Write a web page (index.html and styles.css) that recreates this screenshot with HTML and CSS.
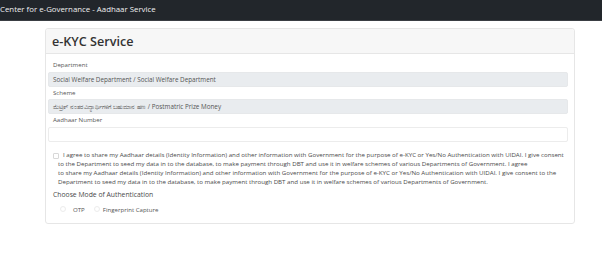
FILE: index.html
```html
<!DOCTYPE html>
<html>
<head>
<meta charset="utf-8">
<link rel="stylesheet" href="styles.css">
</head>
<body>
<nav class="navbar"><span class="brand">Center for e-Governance - Aadhaar Service</span></nav>
<div class="card">
  <div class="card-header">e-KYC Service</div>
  <div class="card-body">
    <label class="lbl">Department</label>
    <div class="input disabled">Social Welfare Department / Social Welfare Department</div>
    <label class="lbl">Scheme</label>
    <div class="input disabled">ಮೆಟ್ರಿಕ್ ನಂತರ ವಿದ್ಯಾರ್ಥಿಗಳಿಗೆ ಬಹುಮಾನ ಹಣ &nbsp;/ Postmatric Prize Money</div>
    <label class="lbl">Aadhaar Number</label>
    <div class="input"></div>
    <div class="consent">
      <span class="checkbox"></span>
      <p class="consent-text"><span class="first">I agree to share my Aadhaar details (Identity Information) and other information with Government for the purpose of e-KYC or Yes/No Authentication with UIDAI. I give consent</span><br>to the Department to seed my data in to the database, to make payment through DBT and use it in welfare schemes of various Departments of Government. I agree<br>to share my Aadhaar details (Identity Information) and other information with Government for the purpose of e-KYC or Yes/No Authentication with UIDAI. I give consent to the<br>Department to seed my data in to the database, to make payment through DBT and use it in welfare schemes of various Departments of Government.</p>
    </div>
    <div class="mode-title">Choose Mode of Authentication</div>
    <div class="radios">
      <span class="radio"></span><span class="rlabel">OTP</span>
      <span class="radio r2"></span><span class="rlabel">Fingerprint Capture</span>
    </div>
  </div>
</div>
</body>
</html>
```
FILE: styles.css
```css
html, body {
  margin: 0;
  padding: 0;
  background: #ffffff;
  font-family: "Open Sans", "Noto Sans", sans-serif;
  color: #444;
}
.navbar {
  height: 21px;
  background: #22262b;
  border-bottom: 1px solid #3a3e43;
  box-sizing: border-box;
  display: flex;
  align-items: center;
}
.brand {
  color: #f0f0f0;
  font-size: 7.85px;
  line-height: 1;
}
.card {
  margin: 7px 0 0 45px;
  width: 530px;
  height: 196px;
  box-sizing: border-box;
  border: 1px solid #e6e6e6;
  border-radius: 3px;
  display: flex;
  flex-direction: column;
}
.card-header {
  height: 25px;
  box-sizing: border-box;
  background: #f7f7f7;
  border-bottom: 1px solid #e6e6e6;
  font-size: 12.6px;
  font-weight: 600;
  color: #333;
  padding-left: 6px;
  display: flex;
  align-items: center;
  border-radius: 3px 3px 0 0;
}
.card-body {
  padding: 7px 6px 0 2px;
  display: flex;
  flex-direction: column;
}
.lbl {
  font-size: 6.1px;
  color: #555;
  margin-left: 5px;
  height: 7px;
  line-height: 7px;
  margin-bottom: 3.5px;
}
.input {
  height: 15px;
  box-sizing: border-box;
  border: 1px solid #ececec;
  border-radius: 2px;
  background: #fff;
  font-size: 6.3px;
  color: #555;
  padding-left: 4px;
  display: flex;
  align-items: center;
  margin-bottom: 2px;
  white-space: nowrap;
  overflow: hidden;
}
.input.disabled {
  background: #e9ecef;
  border-color: #e6e8ea;
}
.consent {
  display: flex;
  margin-top: 6.5px;
  padding-left: 5px;
  position: relative;
}
.checkbox {
  position: absolute;
  left: 5px;
  top: 2.5px;
  width: 4px;
  height: 4px;
  border: 1px solid #d8d8d8;
  border-radius: 1px;
}
.consent-text {
  margin: 0;
  padding-left: 5px;
  font-size: 6.17px;
  line-height: 9px;
  color: #4a4a4a;
  white-space: nowrap;
}
.first {
  padding-left: 5px;
}
.mode-title {
  margin-left: 5px;
  margin-top: 4px;
  font-size: 6.8px;
  line-height: 9px;
  color: #4a4a4a;
}
.radios {
  display: flex;
  align-items: center;
  height: 8px;
  margin-top: 6px;
  margin-left: 12px;
  font-size: 6.1px;
  color: #555;
}
.radio {
  width: 4px;
  height: 4px;
  border: 1px solid #ececec;
  border-radius: 50%;
  margin-right: 7px;
}
.radio.r2 {
  margin-right: 3px;
}
.rlabel {
  margin-right: 9px;
}
```
